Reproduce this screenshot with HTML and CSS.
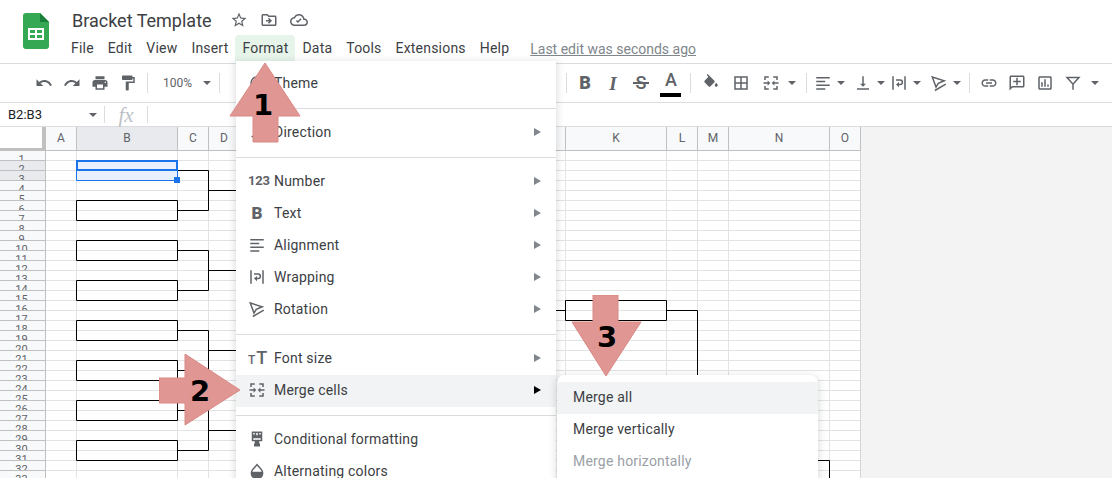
FILE: index.html
```html
<!DOCTYPE html>
<html lang="en">
  <head>
    <meta charset="UTF-8" />
    <title>Bracket Template</title>
    <link rel="stylesheet" href="styles.css">
  </head>
  <body>
    <svg class="sprite">
      <symbol id="i-align" viewBox="0 0 24 24"><path d="M3 4h18v2H3zM3 9h12v2H3zM3 14h18v2H3zM3 19h12v2H3z"/></symbol>
      <symbol id="i-wrap" viewBox="0 0 24 24"><path d="M3 3h2v18H3zM19 3h2v18h-2zM8 7h5.500a4 4 0 0 1 0 8H12v2.500L8 14l4-3.500V13h1.500a2 2 0 0 0 0-4H8z"/></symbol>
      <symbol id="i-rotate" viewBox="0 0 24 24"><path d="M3 4l16 5-8 3.500-3 5z M21 13.500L6.500 22" fill="none" stroke="currentColor" stroke-width="2"/></symbol>
      <symbol id="i-merge" viewBox="0 0 24 24"><path d="M3 3h6v2H5v3H3zM15 3h6v5h-2V5h-4zM3 16h2v3h4v2H3zM19 16h2v5h-6v-2h4zM2 11h5.500V8.500L11 12l-3.500 3.500V13H2zM22 11h-5.500V8.500L13 12l3.500 3.500V13H22z"/></symbol>
    </svg>

    <header class="topbar">
      <svg class="logo" viewBox="0 0 26 36" width="26" height="36">
        <path d="M3 0h14l9 9v24a3 3 0 0 1-3 3H3a3 3 0 0 1-3-3V3a3 3 0 0 1 3-3z" fill="#34a853"/>
        <path d="M17 0l9 9h-9z" fill="#188038"/>
        <path d="M5 15h16v12H5zM7 17v3h5v-3zM14 17v3h5v-3zM7 22v3h5v-3zM14 22v3h5v-3z" fill="#fff" fill-rule="evenodd"/>
      </svg>
      <div class="doc">
        <div class="title-row">
          <span class="doc-title">Bracket Template</span>
          <svg class="title-icon" viewBox="0 0 24 24"><path d="M22 9.240l-7.190-.620L12 2 9.190 8.630 2 9.240l5.460 4.730L5.820 21 12 17.270 18.180 21l-1.630-7.030L22 9.240zM12 15.400l-3.760 2.270 1-4.280-3.320-2.880 4.380-.380L12 6.100l1.710 4.040 4.380.380-3.320 2.880 1 4.280L12 15.400z"/></svg>
          <svg class="title-icon" viewBox="0 0 24 24"><path d="M20 6h-8l-2-2H4c-1.110 0-1.990.890-1.990 2L2 18c0 1.110.890 2 2 2h16c1.110 0 2-.890 2-2V8c0-1.110-.890-2-2-2zm0 12H4V6h5.170l2 2H20v10zM12.160 12H8v2h4.160l-1.590 1.590L12 17l4-4-4-4-1.410 1.410z"/></svg>
          <svg class="title-icon" viewBox="0 0 24 24"><path d="M19.350 10.040C18.670 6.590 15.640 4 12 4 9.110 4 6.600 5.640 5.350 8.040 2.340 8.360 0 10.910 0 14c0 3.310 2.690 6 6 6h13c2.760 0 5-2.240 5-5 0-2.640-2.050-4.780-4.650-4.960zM19 18H6c-2.210 0-4-1.790-4-4 0-2.050 1.530-3.760 3.560-3.970l1.070-.110.500-.950C8.080 7.140 9.940 6 12 6c2.620 0 4.880 1.860 5.390 4.430l.300 1.500 1.530.110c1.560.100 2.780 1.410 2.780 2.960 0 1.650-1.350 3-3 3zM10.500 16l5-5-1.400-1.400-3.600 3.600-1.200-1.200-1.400 1.400z"/></svg>
        </div>
        <nav class="menubar">
          <span class="menubar-item">File</span>
          <span class="menubar-item">Edit</span>
          <span class="menubar-item">View</span>
          <span class="menubar-item">Insert</span>
          <span class="menubar-item is-open">Format</span>
          <span class="menubar-item">Data</span>
          <span class="menubar-item">Tools</span>
          <span class="menubar-item">Extensions</span>
          <span class="menubar-item">Help</span>
          <span class="last-edit">Last edit was seconds ago</span>
        </nav>
      </div>
    </header>

    <div class="toolbar">
      <div class="tb-group">
        <span class="tb-btn"><svg viewBox="0 0 24 24"><path d="M12.500 8c-2.650 0-5.050.990-6.900 2.600L2 7v9h9l-3.620-3.620c1.390-1.160 3.160-1.880 5.120-1.880 3.540 0 6.550 2.310 7.600 5.500l2.370-.780C21.080 11.030 17.150 8 12.500 8z"/></svg></span>
        <span class="tb-btn"><svg viewBox="0 0 24 24"><path d="M18.400 10.600C16.550 8.990 14.150 8 11.500 8c-4.650 0-8.580 3.030-9.960 7.220L3.900 16c1.050-3.190 4.050-5.500 7.600-5.500 1.950 0 3.730.720 5.120 1.880L13 16h9V7l-3.600 3.600z"/></svg></span>
        <span class="tb-btn"><svg viewBox="0 0 24 24"><path d="M19 8H5c-1.660 0-3 1.340-3 3v6h4v4h12v-4h4v-6c0-1.660-1.340-3-3-3zm-3 11H8v-5h8v5zm3-7c-.550 0-1-.450-1-1s.450-1 1-1 1 .450 1 1-.450 1-1 1zm-1-9H6v4h12V3z"/></svg></span>
        <span class="tb-btn"><svg viewBox="0 0 24 24"><path d="M18 4V3c0-.550-.450-1-1-1H5c-.550 0-1 .450-1 1v4c0 .550.450 1 1 1h12c.550 0 1-.450 1-1V6h1v4H9v11c0 .550.450 1 1 1h2c.550 0 1-.450 1-1v-9h8V4h-3z"/></svg></span>
        <span class="tb-sep"></span>
        <span class="zoom-box">100%<i class="caret"></i></span>
        <span class="tb-sep"></span>
      </div>
      <div class="tb-group">
        <span class="tb-sep tb-sep-first"></span>
        <span class="tb-btn tb-letter tb-bold">B</span>
        <span class="tb-btn tb-letter tb-italic">I</span>
        <span class="tb-btn tb-letter tb-strike">S</span>
        <span class="tb-btn tb-letter tb-color">A<i class="color-bar"></i></span>
        <span class="tb-sep"></span>
        <span class="tb-btn tb-wide"><svg viewBox="0 0 24 24"><path d="M16.560 8.940L7.620 0 6.210 1.410l2.380 2.380-5.150 5.150c-.590.590-.590 1.540 0 2.120l5.500 5.500c.290.290.680.440 1.060.440s.770-.150 1.060-.440l5.500-5.500c.590-.580.590-1.530 0-2.120zM19 11.500s-2 2.170-2 3.500c0 1.100.900 2 2 2s2-.900 2-2c0-1.330-2-3.500-2-3.500z"/></svg></span>
        <span class="tb-btn tb-wide"><svg viewBox="0 0 24 24"><path d="M3 3v18h18V3H3zm8 16H5v-6h6v6zm0-8H5V5h6v6zm8 8h-6v-6h6v6zm0-8h-6V5h6v6z"/></svg></span>
        <span class="tb-btn tb-wide"><svg><use href="#i-merge"/></svg></span>
        <span class="tb-caret tb-caret-merge"><i class="caret"></i></span>
        <span class="tb-sep tb-sep-merge"></span>
        <span class="tb-btn tb-narrow"><svg><use href="#i-align"/></svg></span>
        <span class="tb-caret"><i class="caret"></i></span>
        <span class="tb-btn tb-narrow tb-next"><svg viewBox="0 0 24 24"><path d="M16 13h-3V3h-2v10H8l4 4 4-4zM4 19v2h16v-2H4z"/></svg></span>
        <span class="tb-caret"><i class="caret"></i></span>
        <span class="tb-btn tb-narrow"><svg><use href="#i-wrap"/></svg></span>
        <span class="tb-caret"><i class="caret"></i></span>
        <span class="tb-btn tb-narrow tb-next"><svg><use href="#i-rotate"/></svg></span>
        <span class="tb-caret"><i class="caret"></i></span>
        <span class="tb-sep"></span>
        <span class="tb-btn"><svg viewBox="0 0 24 24"><path d="M3.900 12c0-1.710 1.390-3.100 3.100-3.100h4V7H7c-2.760 0-5 2.240-5 5s2.240 5 5 5h4v-1.900H7c-1.710 0-3.100-1.390-3.100-3.100zM8 13h8v-2H8v2zm9-6h-4v1.900h4c1.710 0 3.100 1.390 3.100 3.100s-1.390 3.100-3.100 3.100h-4V17h4c2.760 0 5-2.240 5-5s-2.240-5-5-5z"/></svg></span>
        <span class="tb-btn"><svg viewBox="0 0 24 24"><path d="M20 2H4c-1.100 0-2 .900-2 2v18l4-4h14c1.100 0 2-.900 2-2V4c0-1.100-.900-2-2-2zm0 14H5.170L4 17.170V4h16v12zM11 5h2v4h4v2h-4v4h-2v-4H7V9h4z"/></svg></span>
        <span class="tb-btn"><svg viewBox="0 0 24 24"><path d="M19 3H5c-1.100 0-2 .900-2 2v14c0 1.100.900 2 2 2h14c1.100 0 2-.900 2-2V5c0-1.100-.900-2-2-2zm0 16H5V5h14v14zM7 11h2v6H7zm4-4h2v10h-2zm4 7h2v3h-2z"/></svg></span>
        <span class="tb-btn"><svg viewBox="0 0 24 24"><path d="M4 4.500h16l-8 9zM12 13v8" fill="none" stroke="currentColor" stroke-width="2"/></svg></span>
        <span class="tb-caret tb-caret-last"><i class="caret"></i></span>
      </div>
    </div>

    <div class="formula-bar">
      <div class="name-box">B2:B3<i class="caret"></i></div>
      <span class="fb-sep"></span>
      <span class="fx">fx</span>
      <span class="fb-sep"></span>
    </div>

    <main class="sheet">
      <div class="col-heads">
        <div class="corner"></div>
        <div class="col-head col-s">A</div>
        <div class="col-head col-w is-sel">B</div>
        <div class="col-head col-s">C</div>
        <div class="col-head col-s">D</div>
        <div class="col-head col-w">E</div>
        <div class="col-head col-s">F</div>
        <div class="col-head col-s">G</div>
        <div class="col-head col-w">H</div>
        <div class="col-head col-s">I</div>
        <div class="col-head col-s">J</div>
        <div class="col-head col-w">K</div>
        <div class="col-head col-s">L</div>
        <div class="col-head col-s">M</div>
        <div class="col-head col-w">N</div>
        <div class="col-head col-s">O</div>
      </div>
      <div class="sheet-body">
        <div class="row-heads">
          <div class="row-head">1</div>
          <div class="row-head is-sel">2</div>
          <div class="row-head is-sel">3</div>
          <div class="row-head">4</div>
          <div class="row-head">5</div>
          <div class="row-head">6</div>
          <div class="row-head">7</div>
          <div class="row-head">8</div>
          <div class="row-head">9</div>
          <div class="row-head">10</div>
          <div class="row-head">11</div>
          <div class="row-head">12</div>
          <div class="row-head">13</div>
          <div class="row-head">14</div>
          <div class="row-head">15</div>
          <div class="row-head">16</div>
          <div class="row-head">17</div>
          <div class="row-head">18</div>
          <div class="row-head">19</div>
          <div class="row-head">20</div>
          <div class="row-head">21</div>
          <div class="row-head">22</div>
          <div class="row-head">23</div>
          <div class="row-head">24</div>
          <div class="row-head">25</div>
          <div class="row-head">26</div>
          <div class="row-head">27</div>
          <div class="row-head">28</div>
          <div class="row-head">29</div>
          <div class="row-head">30</div>
          <div class="row-head">31</div>
          <div class="row-head">32</div>
          <div class="row-head">33</div>
        </div>
        <div class="cells">
          <div class="col-s"></div><div class="col-w"></div><div class="col-s"></div><div class="col-s"></div>
          <div class="col-w"></div><div class="col-s"></div><div class="col-s"></div><div class="col-w"></div>
          <div class="col-s"></div><div class="col-s"></div><div class="col-w"></div><div class="col-s"></div>
          <div class="col-s"></div><div class="col-w"></div><div class="col-s"></div>
          <!-- viewBox starts at the grid's page offset, so the bracket uses page coordinates -->
          <svg class="bracket" viewBox="46 151 815 327" width="815" height="327">
            <path class="sel-fill" d="M77 161h100v19H77z"/>
            <g class="line">
              <path d="M76.500 200.500h101v20h-101zM76.500 240.500h101v20h-101zM76.500 280.500h101v20h-101zM76.500 320.500h101v20h-101zM76.500 360.500h101v20h-101zM76.500 400.500h101v20h-101zM76.500 440.500h101v20h-101z"/>
              <path d="M177.500 170.500h31v40h-31M177.500 250.500h31v40h-31M177.500 330.500h31v40h-31M177.500 410.500h31v40h-31"/>
              <path d="M208.500 190.500h31M208.500 270.500h31M208.500 350.500h31M208.500 430.500h31"/>
              <path d="M556 310.500h10M565.500 300.500h101v20h-101zM666.500 310.500h31v70"/>
              <path d="M818 460.500h11.500v20"/>
            </g>
            <path class="sel-line" d="M76.500 180.500h101v-10"/>
            <path class="sel-line" d="M76.500 170.500v10"/>
            <path class="sel-active" d="M77 161h100v9H77z"/>
            <path class="sel-handle" d="M174 177h6v6h-6z"/>
          </svg>
        </div>
      </div>
    </main>

    <div class="menu format-menu">
      <div class="menu-item">
        <svg class="menu-icon" viewBox="0 0 24 24"><path d="M12 3a9 9 0 1 0 0 18h2v-2h-2a7 7 0 1 1 7-7h2a9 9 0 0 0-9-9z"/></svg>
        <span>Theme</span>
      </div>
      <div class="menu-sep"></div>
      <div class="menu-item has-sub">
        <svg class="menu-icon" viewBox="0 0 24 24"><path d="M10 3h2v14h-2zM14 3h2v14h-2zM9 15v6l-5-3z"/></svg>
        <span>Direction</span>
      </div>
      <div class="menu-sep"></div>
      <div class="menu-item has-sub"><span class="menu-icon icon-text icon-num">123</span><span>Number</span></div>
      <div class="menu-item has-sub"><span class="menu-icon icon-text icon-b">B</span><span>Text</span></div>
      <div class="menu-item has-sub"><svg class="menu-icon"><use href="#i-align"/></svg><span>Alignment</span></div>
      <div class="menu-item has-sub"><svg class="menu-icon"><use href="#i-wrap"/></svg><span>Wrapping</span></div>
      <div class="menu-item has-sub"><svg class="menu-icon"><use href="#i-rotate"/></svg><span>Rotation</span></div>
      <div class="menu-sep"></div>
      <div class="menu-item has-sub"><span class="menu-icon icon-text icon-tt"><small>T</small>T</span><span>Font size</span></div>
      <div class="menu-item has-sub is-active"><svg class="menu-icon"><use href="#i-merge"/></svg><span>Merge cells</span></div>
      <div class="menu-sep"></div>
      <div class="menu-item">
        <svg class="menu-icon" viewBox="0 0 24 24"><path d="M5 2h14v13h-4v3h1v4H8v-4h1v-3H5zM7 4v2h2V4zM11 4v3h2V4zM15 4v2h2V4zM7 11v2h10v-2z" fill-rule="evenodd"/></svg>
        <span>Conditional formatting</span>
      </div>
      <div class="menu-item">
        <svg class="menu-icon" viewBox="0 0 24 24"><path d="M12 2l6.400 7.400A8.500 8.500 0 1 1 5.600 9.400zM12 5L7 10.800c-.600.700-1 1.400-1.200 2.200h12.400c-.200-.800-.600-1.500-1.200-2.200z" fill-rule="evenodd"/></svg>
        <span>Alternating colors</span>
      </div>
    </div>

    <div class="menu merge-menu">
      <div class="menu-item is-active">Merge all</div>
      <div class="menu-item">Merge vertically</div>
      <div class="menu-item is-disabled">Merge horizontally</div>
    </div>

    <div class="callout callout-1">
      <svg viewBox="0 0 72 80" width="72" height="80"><path d="M36 0l35 53H49v26H24V53H1z"/></svg>
      <b>1</b>
    </div>
    <div class="callout callout-2">
      <svg viewBox="0 0 82 72" width="82" height="72"><path d="M26 0l55 36-55 35V49H0V24h26z"/></svg>
      <b>2</b>
    </div>
    <div class="callout callout-3">
      <svg viewBox="0 0 72 82" width="72" height="82"><path d="M22 0h25v27h23L35 81 1 27h21z"/></svg>
      <b>3</b>
    </div>
  </body>
</html>
```

FILE: styles.css
```css
* {
  margin: 0;
  padding: 0;
  box-sizing: border-box;
}
body {
  width: 1112px;
  height: 478px;
  overflow: hidden;
  position: relative;
  font-family: Roboto, "Liberation Sans", sans-serif;
  color: #3c4043;
  background-color: #fff;
}
.sprite {
  display: none;
}
svg {
  fill: currentColor;
}

/* title + menu */
.topbar {
  display: flex;
  height: 63px;
  padding: 13px 0 0 23px;
}
.logo {
  flex: none;
}
.doc {
  margin: -5px 0 0 23px;
}
.title-row {
  display: flex;
  align-items: center;
  height: 24px;
  color: #5f6368;
}
.doc-title {
  font-size: 18px;
  color: #3c4043;
  width: 158px;
}
.title-icon {
  width: 18px;
  height: 18px;
  margin-right: 12px;
}
.menubar {
  display: flex;
  align-items: center;
  height: 27px;
  margin: 3px 0 0 -8px;
  font-size: 14px;
}
.menubar-item {
  height: 27px;
  line-height: 27px;
  padding: 0 7px;
  letter-spacing: 0.2px;
  border-radius: 4px 4px 0 0;
}
.menubar-item.is-open {
  background-color: #e6f4ea;
}
.last-edit {
  margin-left: 14px;
  color: #80868b;
  text-decoration: underline;
}

/* toolbar */
.toolbar {
  display: flex;
  justify-content: space-between;
  height: 40px;
  padding: 0 9px 0 30px;
  border-top: 1px solid #dadce0;
  border-bottom: 1px solid #dadce0;
  color: #5f6368;
}
.tb-group {
  display: flex;
  align-items: center;
}
.tb-btn {
  position: relative;
  display: flex;
  align-items: center;
  justify-content: center;
  width: 28px;
  height: 28px;
}
.tb-btn svg {
  width: 18px;
  height: 18px;
}
.tb-wide {
  width: 30px;
}
.tb-narrow {
  width: 22px;
}
.tb-next {
  margin-left: 4px;
}
.tb-sep {
  width: 1px;
  height: 20px;
  margin: 0 5px;
  background-color: #dadce0;
}
.tb-sep-first {
  margin: 0 4px 0 0;
}
.tb-sep-merge {
  margin-left: 8px;
}
.tb-caret {
  display: flex;
  align-items: center;
  justify-content: center;
  width: 14px;
}
.tb-caret-merge {
  width: 12px;
}
.tb-caret-last {
  width: 16px;
}
.caret {
  display: block;
  width: 0;
  height: 0;
  border-left: 4px solid transparent;
  border-right: 4px solid transparent;
  border-top: 4px solid #5f6368;
}
.zoom-box {
  display: flex;
  align-items: center;
  justify-content: space-between;
  width: 61px;
  padding: 0 3px 0 10px;
  font-size: 12px;
}
.tb-letter {
  font-size: 18px;
  line-height: 1;
}
.tb-bold {
  font-weight: 900;
}
.tb-italic {
  font-family: "Liberation Serif", serif;
  font-style: italic;
  font-weight: 700;
  font-size: 19px;
}
.tb-strike {
  font-weight: 500;
}
.tb-strike::after {
  content: "";
  position: absolute;
  left: 6px;
  top: 13px;
  width: 16px;
  height: 2px;
  background-color: #5f6368;
}
.tb-color {
  margin-left: 2px;
  padding-bottom: 6px;
  font-weight: 500;
}
.color-bar {
  position: absolute;
  left: 3px;
  top: 24px;
  width: 21px;
  height: 4px;
  background-color: #000;
}

/* name box + fx */
.formula-bar {
  display: flex;
  align-items: center;
  height: 24px;
  border-bottom: 1px solid #dadce0;
}
.name-box {
  display: flex;
  align-items: center;
  justify-content: space-between;
  width: 104px;
  padding: 0 7px 0 8px;
  font-size: 13px;
  color: #202124;
}
.fb-sep {
  width: 1px;
  height: 17px;
  background-color: #dadce0;
}
.fx {
  width: 42px;
  text-align: center;
  font-family: "Liberation Serif", serif;
  font-style: italic;
  font-size: 21px;
  line-height: 20px;
  color: #bdc1c6;
}

/* grid */
.sheet {
  height: 351px;
  background-color: #f3f3f3;
}
.col-heads {
  display: flex;
  height: 24px;
}
.corner {
  width: 46px;
  background-color: #fff;
  border-right: 4px solid #c0c0c0;
  border-bottom: 3px solid #c0c0c0;
}
.col-s {
  flex: none;
  width: 31px;
}
.col-w {
  flex: none;
  width: 101px;
}
.col-head {
  line-height: 23px;
  text-align: center;
  font-size: 12px;
  color: #5f6368;
  background-color: #f8f9fa;
  border-right: 1px solid #c0c0c0;
  border-bottom: 1px solid #c0c0c0;
}
.col-head.is-sel,
.row-head.is-sel {
  background-color: #e8eaed;
}
.sheet-body {
  display: flex;
}
.row-heads {
  flex: none;
  width: 46px;
  height: 327px;
  overflow: hidden;
}
.row-head {
  height: 10px;
  overflow: hidden;
  line-height: 18px;
  text-align: center;
  padding-right: 2px;
  font-size: 11px;
  color: #5f6368;
  background-color: #f8f9fa;
  border-right: 1px solid #c0c0c0;
  border-bottom: 1px solid #c0c0c0;
}
.cells {
  position: relative;
  display: flex;
  height: 327px;
  background-color: #fff;
  background-image: repeating-linear-gradient(to bottom, transparent 0, transparent 9px, #e2e3e3 9px, #e2e3e3 10px);
}
.cells > div {
  border-right: 1px solid #e2e3e3;
}
.cells > div:last-of-type {
  border-right-color: #d4d4d4;
}
.bracket {
  position: absolute;
  left: 0;
  top: 0;
  fill: none;
}
.line {
  fill: none;
  stroke: #000;
  stroke-width: 1;
}
.sel-fill {
  fill: #e8f0fe;
}
.sel-line {
  fill: none;
  stroke: #1a73e8;
  stroke-width: 1;
}
.sel-active {
  fill: none;
  stroke: #1a73e8;
  stroke-width: 2;
}
.sel-handle {
  fill: #1a73e8;
}

/* dropdown menus */
.menu {
  position: absolute;
  background-color: #fff;
  font-size: 14px;
  letter-spacing: 0.2px;
  box-shadow: 0 2px 6px 2px rgba(60, 64, 67, 0.15);
}
.format-menu {
  left: 236px;
  top: 61px;
  width: 320px;
  height: 430px;
  padding: 7px 0;
}
.merge-menu {
  left: 557px;
  top: 375px;
  width: 261px;
  height: 120px;
  padding: 7px 0;
  border-radius: 8px 8px 0 0;
}
.menu-item {
  position: relative;
  display: flex;
  align-items: center;
  gap: 8px;
  height: 32px;
  padding: 0 0 2px 12px;
}
.merge-menu .menu-item {
  padding-left: 16px;
}
.menu-item.is-active {
  background-color: #f1f3f4;
}
.menu-item.is-disabled {
  color: #9aa0a6;
}
.has-sub::after {
  content: "";
  position: absolute;
  right: 15px;
  top: 11px;
  border-left: 7px solid #80868b;
  border-top: 4px solid transparent;
  border-bottom: 4px solid transparent;
}
.has-sub.is-active::after {
  border-left-color: #000;
}
.menu-sep {
  height: 1px;
  margin: 8px 0;
  background-color: #dadce0;
}
.menu-icon {
  flex: none;
  width: 18px;
  height: 18px;
  color: #5f6368;
}
.icon-text {
  display: block;
  line-height: 18px;
  text-align: center;
  font-weight: 700;
  white-space: nowrap;
  letter-spacing: 0;
}
.icon-num {
  font-size: 13px;
  letter-spacing: -0.2px;
}
.icon-b {
  font-size: 17px;
  font-weight: 900;
}
.icon-tt {
  font-size: 18px;
  font-weight: 500;
}
.icon-tt small {
  font-size: 12px;
  margin-right: 1px;
}

/* tutorial arrows */
.callout {
  position: absolute;
  display: flex;
  align-items: center;
  justify-content: center;
}
.callout svg {
  position: absolute;
  left: 0;
  top: 0;
  fill: #e09693;
  stroke: #d98985;
  stroke-width: 1;
}
.callout b {
  position: absolute;
  font-family: "DejaVu Sans", sans-serif;
  font-size: 29px;
  line-height: 30px;
  color: #000;
}
.callout-1 {
  left: 229px;
  top: 63px;
  width: 72px;
  height: 80px;
}
.callout-1 b {
  left: 24px;
  top: 27px;
}
.callout-2 {
  left: 159px;
  top: 354px;
  width: 82px;
  height: 72px;
}
.callout-2 b {
  left: 31px;
  top: 22px;
}
.callout-3 {
  left: 571px;
  top: 295px;
  width: 72px;
  height: 82px;
}
.callout-3 b {
  left: 26px;
  top: 27px;
}
```
